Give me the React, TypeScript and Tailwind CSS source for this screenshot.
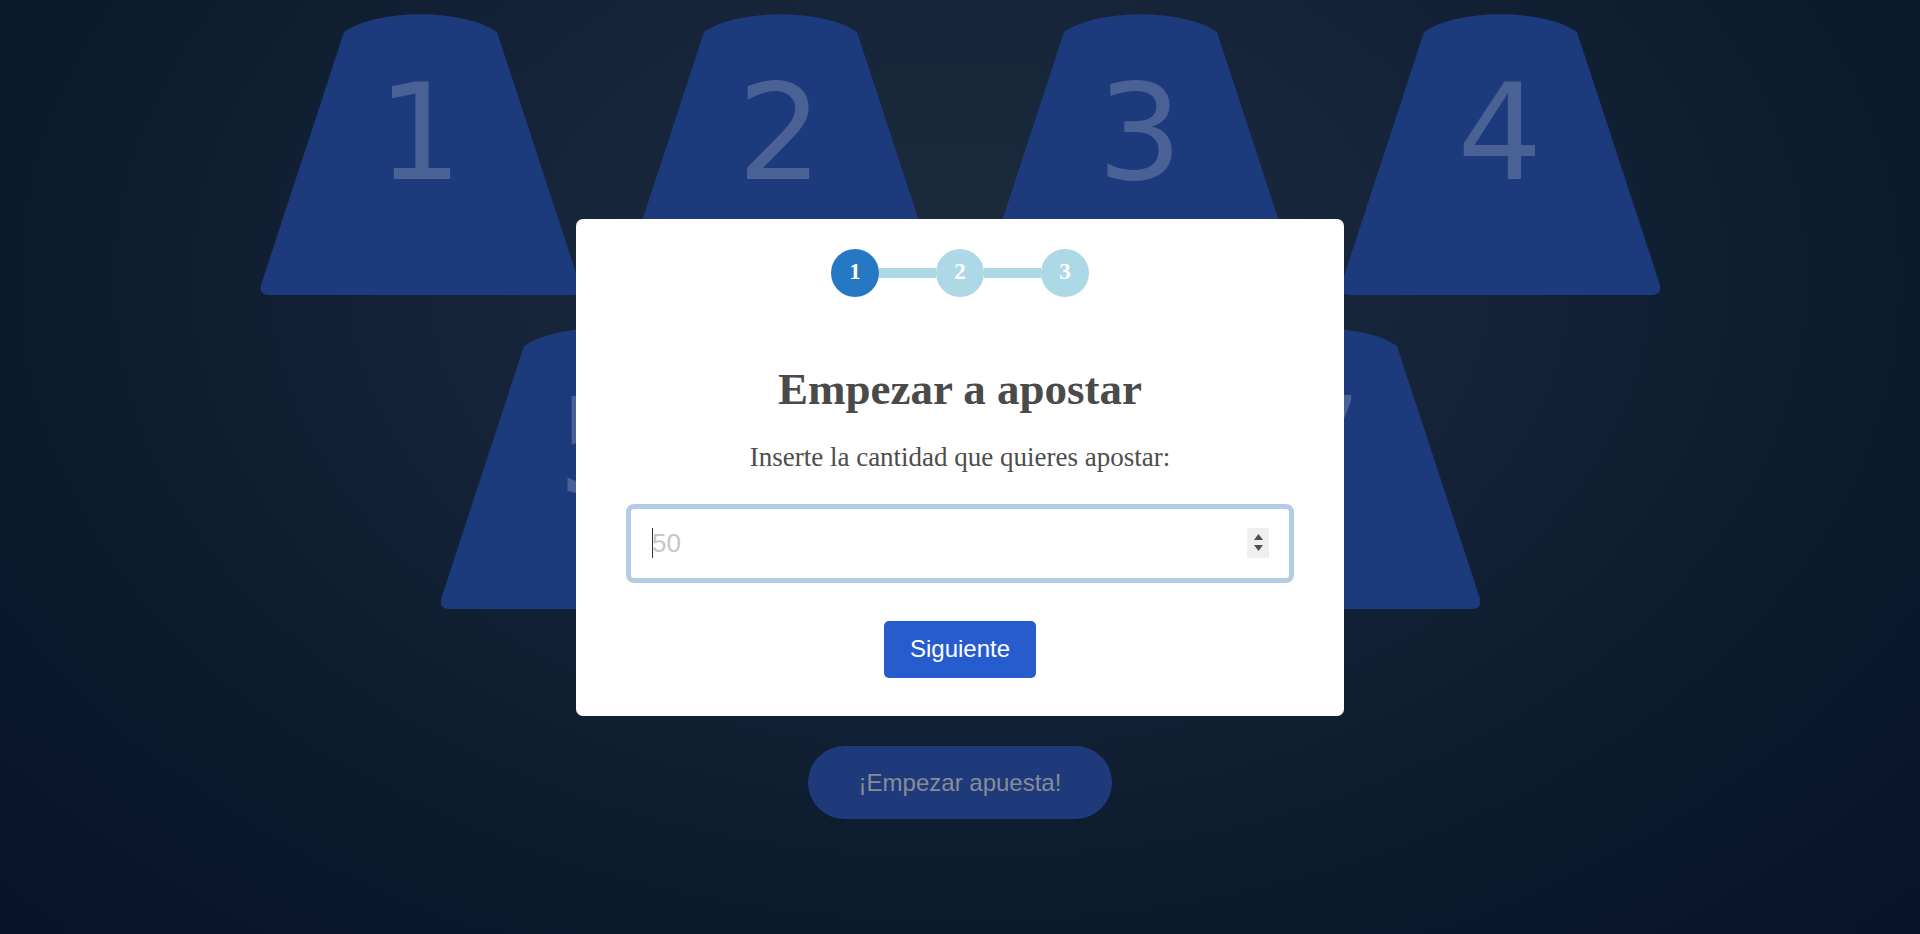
import { useEffect, useRef } from 'react';

const TOP_ROW = [1, 2, 3, 4];
const BOTTOM_ROW = [5, 6, 7];

function Cup({ n }: { n: number }) {
  return (
    <div className="relative w-[323px] h-[281px] flex justify-center">
      <svg className="absolute inset-0" width="323" height="281" viewBox="0 0 323 281">
        <path
          d="M85 18 A88 35 0 0 1 238 18 L321 271 Q323 281 313 281 L10 281 Q0 281 2 271 Z"
          fill="#1d3a7c"
        />
      </svg>
      <span
        className="relative pt-[52px] text-[134px] leading-none text-white/20"
        style={{ fontFamily: '"DejaVu Sans", sans-serif' }}
      >
        {n}
      </span>
    </div>
  );
}

function Step({ n, active }: { n: number; active?: boolean }) {
  return (
    <div
      className={`w-[48px] h-[48px] rounded-full flex items-center justify-center text-white text-[23px] font-bold ${active ? 'bg-[#2778c4]' : 'bg-[#add8e6]'}`}
      style={{ fontFamily: '"Liberation Serif", serif' }}
    >
      {n}
    </div>
  );
}

export default function App() {
  const inputRef = useRef<HTMLInputElement>(null);
  useEffect(() => { inputRef.current?.focus(); }, []);

  return (
    <div
      className="relative w-full h-[934px] overflow-hidden bg-[radial-gradient(ellipse_at_50%_30%,#1c2b3b_0%,#16243a_35%,#0d1b2e_65%,#06132a_100%)]"
      style={{ fontFamily: '"Liberation Sans", Arial, sans-serif' }}
    >
      {/* Cups board */}
      <div className="flex flex-col items-center pt-[14px]">
        <div className="flex gap-[37px]">
          {TOP_ROW.map(n => <Cup key={n} n={n} />)}
        </div>
        <div className="flex gap-[37px] mt-[33px]">
          {BOTTOM_ROW.map(n => <Cup key={n} n={n} />)}
        </div>
        <button className="mt-[137px] w-[304px] h-[73px] rounded-full bg-[#1e3a7a] text-[24px] text-[#878c98]">
          ¡Empezar apuesta!
        </button>
      </div>

      {/* Modal */}
      <div className="absolute inset-0 flex items-center justify-center">
        <div className="w-[768px] h-[497px] bg-white rounded-[7px] px-[50px] pt-[30px] flex flex-col items-center">
          <div className="flex items-center">
            <Step n={1} active />
            <div className="w-[57px] h-[10px] bg-[#add8e6]" />
            <Step n={2} />
            <div className="w-[57px] h-[10px] bg-[#add8e6]" />
            <Step n={3} />
          </div>

          <h1
            className="mt-[67px] text-[45px] leading-[50px] font-bold text-[#4a4a4a]"
            style={{ fontFamily: '"Liberation Serif", serif' }}
          >
            Empezar a apostar
          </h1>
          <p
            className="mt-[27px] text-[27px] leading-[32px] text-[#4d4d4d]"
            style={{ fontFamily: '"Liberation Serif", serif' }}
          >
            Inserte la cantidad que quieres apostar:
          </p>

          <div className="relative mt-[31px] w-full">
            <input
              ref={inputRef}
              autoFocus
              type="number"
              placeholder="50"
              className="w-full h-[79px] border-[5px] border-[#b1cce4] rounded-[8px] pl-[21px] pr-[20px] text-[26px] text-[#333] caret-transparent placeholder:text-[#c6c6c6] outline-none [appearance:textfield] [&::-webkit-inner-spin-button]:appearance-none [&::-webkit-outer-spin-button]:appearance-none"
            />
            {/* caret */}
            <div className="absolute left-[26px] top-[24px] w-px h-[30px] bg-[#333]" />
            {/* spin buttons */}
            <div className="absolute right-[25px] top-[24px] w-[22px] h-[30px] bg-[#efefef] flex flex-col items-center justify-center gap-[5px]">
              <svg width="9" height="6" viewBox="0 0 9 6"><path d="M4.5 0 L9 6 L0 6 Z" fill="#4f4f4f" /></svg>
              <svg width="9" height="6" viewBox="0 0 9 6"><path d="M0 0 L9 0 L4.5 6 Z" fill="#4f4f4f" /></svg>
            </div>
          </div>

          <button className="mt-[38px] w-[152px] h-[57px] rounded-[5px] bg-[#275ccf] text-white text-[24px]">
            Siguiente
          </button>
        </div>
      </div>
    </div>
  );
}
